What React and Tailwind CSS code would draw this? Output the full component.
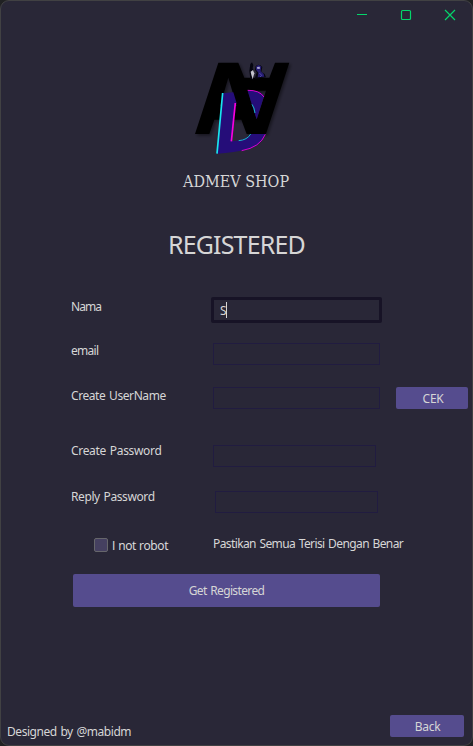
import React from "react";

function Logo() {
  return (
    <svg className="h-[110px] w-[125px] shrink-0" viewBox="0 0 375 330">
      <defs>
        <filter id="shade" x="-20%" y="-20%" width="150%" height="150%">
          <feDropShadow dx="5" dy="5" stdDeviation="5" floodColor="#000" floodOpacity="0.45" />
        </filter>
      </defs>
      <g filter="url(#shade)">
        <path d="M115 38H175L193 83H268L285 38H328L258 252H200L184 209H103L88 252H45Z M145 83L120 168H170Z M203 122L230 208L258 122Z" fill="#000" fillRule="evenodd" />
      </g>
      <path d="M128 130L160 127L170 160H166L154 274Q198 272 212 252H256Q242 288 203 298Q164 308 111 311Z" fill="#250d79" />
      <path d="M203 122Q238 120 252 138L230 208L215 162Z" fill="#250d79" />
      <path d="M128 129L111 311" fill="none" stroke="#18e5ee" strokeWidth="5" />
      <path d="M166 159L154 274" fill="none" stroke="#f900de" strokeWidth="5" />
      <path d="M203 121Q238 120 252 141M256 253Q240 292 185 302" fill="none" stroke="#d900cf" strokeWidth="3" />
      <path d="M216 163Q223 172 225 189M212 252Q202 270 176 272" fill="none" stroke="#16b9c5" strokeWidth="3" />
      <path d="M211 42L216 37L220 45L218 55L222 65L220 91L211 86L208 63ZM227 49Q236 38 247 51L244 66L254 72L258 82L224 87L230 67L225 60Z" fill="#050510" />
      <path d="M228 50Q235 40 244 50L242 64L251 72L253 80L233 82L235 68L228 59Z" fill="#251c70" />
      <path d="M231 51L239 50L240 56L232 57Z" fill="#aaa5d4" />
      <path d="M212 65L219 60L223 70L218 88L214 74Z" fill="#c4c4cd" />
      <path d="M238 69L245 76L240 81" fill="none" stroke="#5147a7" strokeWidth="3" />
    </svg>
  );
}

function Field({ label, row, labelStyle, width, children }) {
  return (
    <div className={`flex h-[22px] shrink-0 ${row}`}>
      <div className={`ml-[70px] shrink-0 whitespace-nowrap text-[12px] leading-[18px] ${labelStyle}`}>{label}</div>
      <input aria-label={label} className={`h-[22px] shrink-0 border border-[#211c40] bg-transparent outline-none ${width}`} />
      {children}
    </div>
  );
}

export default function App() {
  return (
    <div className="h-[746px] w-[473px] overflow-hidden bg-[#202123]">
      <main className="flex h-[746px] w-[473px] flex-col overflow-hidden rounded-[9px] border border-[#414143] bg-[#292737] font-['Noto_Sans',sans-serif] text-[#d6d6d6]">
        <header className="flex h-[28px] shrink-0 justify-end">
          <svg width="116" height="28" viewBox="0 0 116 28" fill="none" stroke="#04d66b" strokeWidth="1.2">
            <path d="M1 13.5H11" />
            <rect x="45.5" y="9.5" width="9" height="9" rx="1" />
            <path d="M89 9L99 19M99 9L89 19" />
          </svg>
        </header>
        <div className="mt-[21px] ml-[179px] flex h-[110px]"><Logo /></div>
        <div className="mt-[11px] ml-[182px] h-[22px] whitespace-nowrap font-['DejaVu_Serif_Condensed','DejaVu_Serif',serif] text-[16px] leading-[22px]"><span>ADMEV SHOP</span></div>
        <h1 className="mt-[34px] ml-[167px] h-[34px] whitespace-nowrap text-[25px] leading-[34px] tracking-[-0.85px]"><span>REGISTERED</span></h1>
        <div className="mt-[36px] flex h-[26px] shrink-0">
          <div className="ml-[70px] w-[140px] text-[12px] leading-[20px] tracking-[-0.95px]">Nama</div>
          <div className="flex h-[26px] w-[171px] items-center rounded-[2px] border-[3px] border-[#171326] pl-[6px] text-[12px]">
            <span className="mt-[2px] w-[6px]">S</span><i className="h-[16px] w-px bg-[#d6d6d6]" />
          </div>
        </div>
        <Field label="email" row="mt-[20px]" labelStyle="w-[142px] -mt-px tracking-[-0.7px]" width="w-[167px]" />
        <Field label="Create UserName" row="mt-[22px]" labelStyle="w-[142px] tracking-[-0.42px] [word-spacing:1px]" width="w-[167px]">
          <button className="ml-[16px] h-[22px] w-[72px] rounded-[2px] bg-[#554c8e] pl-[2px] text-[12px] leading-[24px] tracking-[-0.3px]"><span>CEK</span></button>
        </Field>
        <Field label="Create Password" row="mt-[36px]" labelStyle="w-[142px] -mt-[3px] tracking-[-0.32px] [word-spacing:1px]" width="w-[163px]" />
        <Field label="Reply Password" row="mt-[24px]" labelStyle="w-[144px] -mt-[3px] tracking-[-0.4px] [word-spacing:1px]" width="w-[163px]" />
        <div className="mt-[21px] flex h-[24px] shrink-0 whitespace-nowrap text-[12px]">
          <span className="mt-[4px] ml-[93px] h-[14px] w-[14px] rounded-[2px] border border-[#66666b] bg-[#454060]" />
          <span className="mt-[3px] ml-[3px] w-[102px] pl-px font-['Open_Sans',sans-serif] leading-[18px] tracking-[-0.4px] [word-spacing:0.5px] text-[#e0e0e0]">I not robot</span>
          <span className="leading-[20px] tracking-[-0.6px] [word-spacing:1px]">Pastikan Semua Terisi Dengan Benar</span>
        </div>
        <button className="mt-[16px] ml-[72px] h-[33px] w-[307px] shrink-0 rounded-[2px] bg-[#554c8e] text-[12px] leading-[33px] tracking-[-0.63px] [word-spacing:1px]"><span>Get Registered</span></button>
        <footer className="mt-auto mb-[8px] flex h-[22px] items-start justify-between text-[12px]">
          <span className="ml-[6px] mt-[8px] leading-[18px] tracking-[-0.45px] [word-spacing:1px]">Designed by @mabidm</span>
          <button className="mr-[8px] h-[22px] w-[74px] rounded-[2px] bg-[#554c8e] pl-[1px] leading-[24px] tracking-[-0.3px]"><span>Back</span></button>
        </footer>
      </main>
    </div>
  );
}
